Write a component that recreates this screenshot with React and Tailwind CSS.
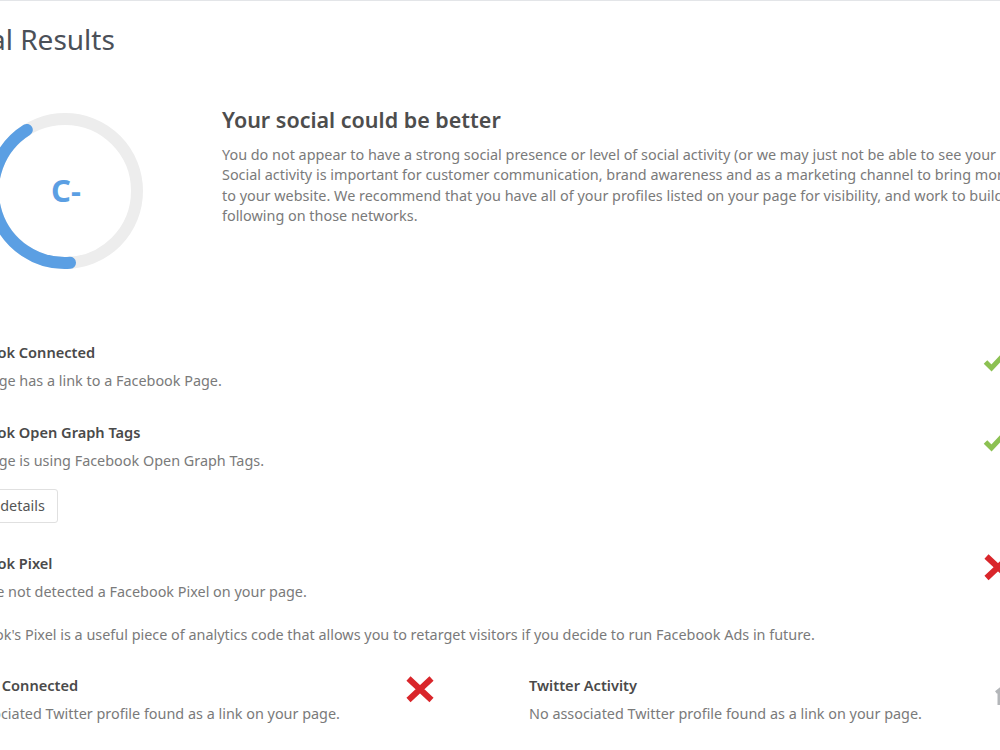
import React from "react";

function Check() {
  return (
    <svg width="30" height="30" viewBox="0 0 30 30">
      <path d="M2.5 20 L8.5 26 L21 12.5" fill="none" stroke="#8cc152" strokeWidth="5" />
    </svg>
  );
}

function Cross() {
  return (
    <svg width="30" height="30" viewBox="0 0 30 30">
      <path d="M3.5 3.5 L26.5 25 M26.5 3.5 L3.5 25" fill="none" stroke="#d9262b" strokeWidth="6" />
    </svg>
  );
}

function Neutral() {
  return (
    <svg width="30" height="30" viewBox="0 0 30 30">
      <path d="M13 17.5 L16 15 L16 31" fill="none" stroke="#b3b6b9" strokeWidth="3" />
    </svg>
  );
}

function Row({ title, desc, icon, children, className = "" }) {
  return (
    <div className={"flex justify-between items-start " + className}>
      <div>
        <h3 className="text-[14.6px] leading-[20px] font-semibold text-[#4a4a4a] whitespace-nowrap">{title}</h3>
        <p className="mt-[9px] text-[14.4px] leading-[20px] text-[#7a7a7a] whitespace-nowrap">{desc}</p>
        {children}
      </div>
      <div className="w-[30px] h-[30px] shrink-0">{icon}</div>
    </div>
  );
}

function Gauge() {
  return (
    <div className="relative w-[156px] h-[156px]">
      <svg width="156" height="156" viewBox="0 0 156 156">
        <circle cx="78" cy="78" r="72" fill="none" stroke="#ededed" strokeWidth="12" />
        <path d="M83 149.8 A72 72 0 0 1 39.8 16.9" fill="none" stroke="#5b9fe3" strokeWidth="12" strokeLinecap="round" />
      </svg>
      <div className="absolute inset-0 flex items-center justify-center">
        <span className="text-[31px] leading-none font-bold text-[#5b9fe3] pl-[2px] pb-[1px]">C-</span>
      </div>
    </div>
  );
}

export default function App() {
  return (
    <div className="w-[1000px] h-[750px] overflow-hidden bg-white border-t border-[#e3e5e8] font-['Noto_Sans',sans-serif]">
      <div className="ml-[-53px] w-[1066px]">
        <h1 className="ml-[-10px] pt-[20px] text-[28px] leading-[36px] text-[#4b5058] whitespace-nowrap">Social Results</h1>

        <div className="mt-[48px] flex items-start">
          <div className="ml-[40px] mt-[8px] shrink-0">
            <Gauge />
          </div>
          <div className="ml-[79px]">
            <h2 className="text-[21.5px] leading-[30px] font-semibold text-[#4d4d4d] whitespace-nowrap">Your social could be better</h2>
            <div className="mt-[10px] text-[14.4px] leading-[20.3px] text-[#7a7a7a] whitespace-nowrap">
              <div>You do not appear to have a strong social presence or level of social activity (or we may just not be able to see your profiles!).</div>
              <div>Social activity is important for customer communication, brand awareness and as a marketing channel to bring more visitors</div>
              <div>to your website. We recommend that you have all of your profiles listed on your page for visibility, and work to build a</div>
              <div>following on those networks.</div>
            </div>
          </div>
        </div>

        <Row className="mt-[73px]" title="Facebook Connected" desc="Your page has a link to a Facebook Page." icon={<Check />} />

        <Row className="mt-[31px]" title="Facebook Open Graph Tags" desc="Your page is using Facebook Open Graph Tags." icon={<Check />}>
          <button className="mt-[18px] px-3 py-[6px] border border-[#e0e0e0] rounded-[3px] bg-white text-[14.4px] leading-[20px] text-[#555]">
            Show details
          </button>
        </Row>

        <Row className="mt-[30px]" title="Facebook Pixel" desc="We have not detected a Facebook Pixel on your page." icon={<Cross />}>
          <p className="mt-[23px] text-[14.4px] leading-[20px] text-[#7a7a7a] whitespace-nowrap">
            Facebook's Pixel is a useful piece of analytics code that allows you to retarget visitors if you decide to run Facebook Ads in future.
          </p>
        </Row>

        <div className="mt-[30px] grid grid-cols-[488px_484px] gap-x-[94px]">
          <Row title="Twitter Connected" desc="No associated Twitter profile found as a link on your page." icon={<Cross />} />
          <Row title="Twitter Activity" desc="No associated Twitter profile found as a link on your page." icon={<Neutral />} />
        </div>
      </div>
    </div>
  );
}
